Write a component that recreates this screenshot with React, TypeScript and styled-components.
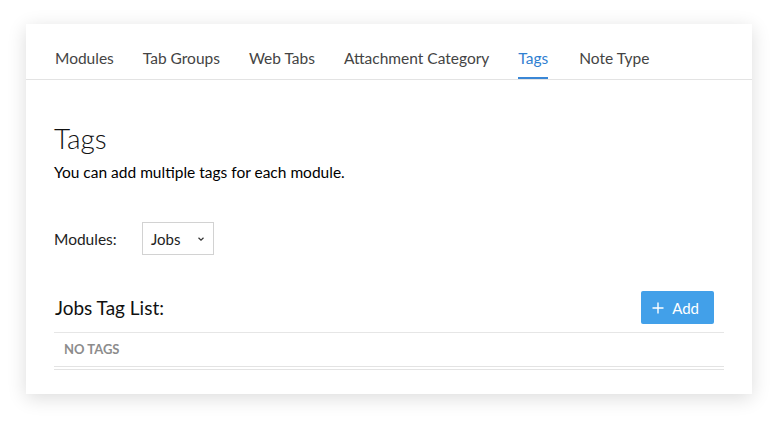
import styled, { createGlobalStyle } from "styled-components";

const GlobalStyle = createGlobalStyle`
  html, body {
    margin: 0;
    background: #ffffff;
  }
  body {
    font-family: "Lato", "Open Sans", sans-serif;
    color: #222;
  }
`;

const TABS = ["Modules", "Tab Groups", "Web Tabs", "Attachment Category", "Tags", "Note Type"];
const ACTIVE_TAB = "Tags";

export default function App() {
  return (
    <>
      <GlobalStyle />
      <Page>
        <Card>
          <TabBar>
            {TABS.map((tab) => (
              <Tab key={tab} $active={tab === ACTIVE_TAB}>
                {tab}
              </Tab>
            ))}
          </TabBar>

          <Content>
            <Title>Tags</Title>
            <Description>You can add multiple tags for each module.</Description>

            <FilterRow>
              <FilterLabel>Modules:</FilterLabel>
              <Select>
                <span>Jobs</span>
                <svg width="8" height="6" viewBox="0 0 8 6" fill="none">
                  <path d="M1.5 1.8 L4 4.2 L6.5 1.8" stroke="#333" strokeWidth="1.2" />
                </svg>
              </Select>
            </FilterRow>

            <ListHeader>
              <ListTitle>Jobs Tag List:</ListTitle>
              <AddButton>
                <svg width="12" height="12" viewBox="0 0 12 12">
                  <path d="M6 0.5 V11.5 M0.5 6 H11.5" stroke="#fff" strokeWidth="1.4" />
                </svg>
                Add
              </AddButton>
            </ListHeader>

            <EmptyRow>No tags</EmptyRow>
          </Content>
        </Card>
      </Page>
    </>
  );
}

const Page = styled.div`
  padding: 24px 26px 28px 26px;
`;

const Card = styled.div`
  width: 726px;
  background: #fff;
  box-shadow: 0 4px 18px rgba(0, 0, 0, 0.14);
`;

const TabBar = styled.div`
  display: flex;
  gap: 29px;
  height: 55px;
  padding-left: 29px;
  border-bottom: 1px solid #e3e3e3;
`;

const Tab = styled.div<{ $active: boolean }>`
  display: flex;
  align-items: center;
  padding-top: 12px;
  font-size: 15.5px;
  color: ${({ $active }) => ($active ? "#2f80d1" : "#444")};
  box-shadow: ${({ $active }) => ($active ? "inset 0 -2px 0 #3a87d6" : "none")};
  cursor: pointer;

  &:last-child {
    margin-left: 2px;
  }
`;

const Content = styled.div`
  padding: 42px 28px 24px 28px;
`;

const Title = styled.h1`
  margin: 0;
  font-size: 28px;
  font-weight: 300;
  color: #111;
  line-height: 32px;
`;

const Description = styled.p`
  margin: 8px 0 0 0;
  font-size: 15.5px;
  color: #000;
  line-height: 20px;
`;

const FilterRow = styled.div`
  display: flex;
  align-items: center;
  margin-top: 40px;
`;

const FilterLabel = styled.span`
  width: 88px;
  font-size: 15.5px;
  color: #222;
`;

const Select = styled.div`
  display: flex;
  align-items: center;
  justify-content: space-between;
  box-sizing: border-box;
  width: 72px;
  height: 33px;
  padding: 0 8px 0 8px;
  border: 1px solid #d2d2d2;
  font-size: 15px;
  color: #222;
`;

const ListHeader = styled.div`
  display: flex;
  align-items: center;
  justify-content: space-between;
  margin-top: 36px;
  padding: 0 10px 8px 1px;
  border-bottom: 1px solid #e6e6e6;
`;

const ListTitle = styled.span`
  font-size: 19px;
  color: #111;
`;

const AddButton = styled.button`
  display: flex;
  align-items: center;
  gap: 8px;
  height: 33px;
  padding: 0 15px 0 11px;
  border: none;
  border-radius: 2px;
  background: #42a0e9;
  color: #fff;
  font-family: inherit;
  font-size: 15px;
  cursor: pointer;
`;

const EmptyRow = styled.div`
  padding: 8px 10px 9px 10px;
  font-size: 13px;
  line-height: 16px;
  font-weight: 700;
  text-transform: uppercase;
  color: #8c8c8c;
  border-bottom: 4px double #e3e3e3;
`;
